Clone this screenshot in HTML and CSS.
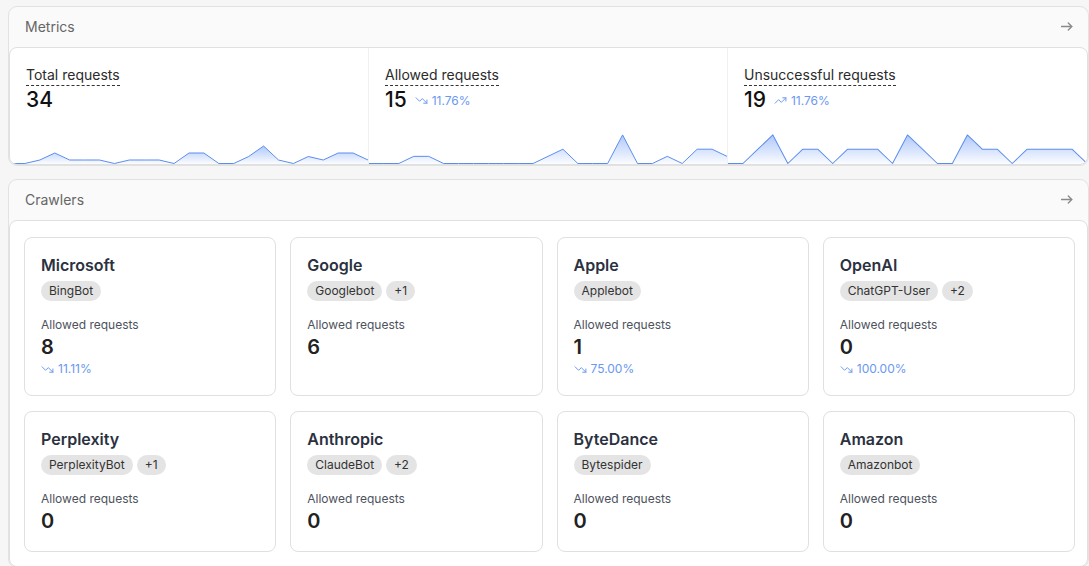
FILE: index.html
```html
<!DOCTYPE html>
<html lang="en">
<head>
<meta charset="utf-8">
<title>Metrics</title>
<link rel="stylesheet" href="styles.css">
</head>
<body>
<div class="page">
  <section class="section">
    <header class="section-head">
      <span class="section-title">Metrics</span>
      <svg class="head-arrow" viewBox="0 0 12 9" width="12" height="9"><path d="M0.5 4.5H11M7.3 1L10.8 4.5L7.3 8"/></svg>
    </header>
    <div class="section-body metrics">
      <div class="metric">
        <span class="metric-label">Total requests</span>
        <div class="metric-value-row"><span class="metric-value">34</span></div>
        <svg class="spark" viewBox="0 0 360 36" preserveAspectRatio="none">
          <defs><linearGradient id="g1" x1="0" y1="0" x2="0" y2="1"><stop offset="0" stop-color="#6e9bf5" stop-opacity="0.55"/><stop offset="1" stop-color="#6e9bf5" stop-opacity="0.03"/></linearGradient></defs>
          <path class="spark-fill" fill="url(#g1)" d="M0,36 L0,35.5 15,35.5 30,32 45,25 60,32 75,32 90,32 105,35.5 120,32 135,32 150,32 165,35.5 180,25 195,25 210,35.5 225,35.5 240,28.5 255,18 270,32 285,35.5 300,28.5 315,32 330,25 345,25 360,32 L360,36 Z"/>
          <polyline class="spark-line" points="0,35.5 15,35.5 30,32 45,25 60,32 75,32 90,32 105,35.5 120,32 135,32 150,32 165,35.5 180,25 195,25 210,35.5 225,35.5 240,28.5 255,18 270,32 285,35.5 300,28.5 315,32 330,25 345,25 360,32"/>
        </svg>
      </div>
      <div class="metric">
        <span class="metric-label">Allowed requests</span>
        <div class="metric-value-row">
          <span class="metric-value">15</span>
          <span class="trend"><svg class="trend-icon" viewBox="0 0 24 24"><polyline points="22 17 13.5 8.5 8.5 13.5 2 7"/><polyline points="16 17 22 17 22 11"/></svg>11.76%</span>
        </div>
        <svg class="spark" viewBox="0 0 360 36" preserveAspectRatio="none">
          <defs><linearGradient id="g2" x1="0" y1="0" x2="0" y2="1"><stop offset="0" stop-color="#6e9bf5" stop-opacity="0.55"/><stop offset="1" stop-color="#6e9bf5" stop-opacity="0.03"/></linearGradient></defs>
          <path class="spark-fill" fill="url(#g2)" d="M0,36 L0,35.5 15,35.5 30,35.5 45,28.35 60,28.35 75,35.5 90,35.5 105,35.5 120,35.5 135,35.5 150,35.5 165,35.5 180,28.35 195,21.2 210,35.5 225,35.5 240,35.5 255,6.9 270,35.5 285,35.5 300,28.35 315,35.5 330,21.2 345,21.2 360,28.35 L360,36 Z"/>
          <polyline class="spark-line" points="0,35.5 15,35.5 30,35.5 45,28.35 60,28.35 75,35.5 90,35.5 105,35.5 120,35.5 135,35.5 150,35.5 165,35.5 180,28.35 195,21.2 210,35.5 225,35.5 240,35.5 255,6.9 270,35.5 285,35.5 300,28.35 315,35.5 330,21.2 345,21.2 360,28.35"/>
        </svg>
      </div>
      <div class="metric">
        <span class="metric-label">Unsuccessful requests</span>
        <div class="metric-value-row">
          <span class="metric-value">19</span>
          <span class="trend"><svg class="trend-icon" viewBox="0 0 24 24"><polyline points="22 7 13.5 15.5 8.5 10.5 2 17"/><polyline points="16 7 22 7 22 13"/></svg>11.76%</span>
        </div>
        <svg class="spark" viewBox="0 0 360 36" preserveAspectRatio="none">
          <defs><linearGradient id="g3" x1="0" y1="0" x2="0" y2="1"><stop offset="0" stop-color="#6e9bf5" stop-opacity="0.55"/><stop offset="1" stop-color="#6e9bf5" stop-opacity="0.03"/></linearGradient></defs>
          <path class="spark-fill" fill="url(#g3)" d="M0,36 L0,35.5 15,35.5 30,21.2 45,6.9 60,35.5 75,21.2 90,21.2 105,35.5 120,21.2 135,21.2 150,21.2 165,35.5 180,6.9 195,21.2 210,35.5 225,35.5 240,6.9 255,21.2 270,21.2 285,35.5 300,21.2 315,21.2 330,21.2 345,21.2 360,35.5 L360,36 Z"/>
          <polyline class="spark-line" points="0,35.5 15,35.5 30,21.2 45,6.9 60,35.5 75,21.2 90,21.2 105,35.5 120,21.2 135,21.2 150,21.2 165,35.5 180,6.9 195,21.2 210,35.5 225,35.5 240,6.9 255,21.2 270,21.2 285,35.5 300,21.2 315,21.2 330,21.2 345,21.2 360,35.5"/>
        </svg>
      </div>
    </div>
  </section>

  <section class="section">
    <header class="section-head">
      <span class="section-title">Crawlers</span>
      <svg class="head-arrow" viewBox="0 0 12 9" width="12" height="9"><path d="M0.5 4.5H11M7.3 1L10.8 4.5L7.3 8"/></svg>
    </header>
    <div class="section-body crawlers">
      <div class="card">
        <div class="card-title">Microsoft</div>
        <div class="badges"><span class="badge">BingBot</span></div>
        <div class="card-label">Allowed requests</div>
        <div class="card-value">8</div>
        <div class="trend card-trend"><svg class="trend-icon" viewBox="0 0 24 24"><polyline points="22 17 13.5 8.5 8.5 13.5 2 7"/><polyline points="16 17 22 17 22 11"/></svg>11.11%</div>
      </div>
      <div class="card">
        <div class="card-title">Google</div>
        <div class="badges"><span class="badge">Googlebot</span><span class="badge">+1</span></div>
        <div class="card-label">Allowed requests</div>
        <div class="card-value">6</div>
      </div>
      <div class="card">
        <div class="card-title">Apple</div>
        <div class="badges"><span class="badge">Applebot</span></div>
        <div class="card-label">Allowed requests</div>
        <div class="card-value">1</div>
        <div class="trend card-trend"><svg class="trend-icon" viewBox="0 0 24 24"><polyline points="22 17 13.5 8.5 8.5 13.5 2 7"/><polyline points="16 17 22 17 22 11"/></svg>75.00%</div>
      </div>
      <div class="card">
        <div class="card-title">OpenAI</div>
        <div class="badges"><span class="badge">ChatGPT-User</span><span class="badge">+2</span></div>
        <div class="card-label">Allowed requests</div>
        <div class="card-value">0</div>
        <div class="trend card-trend"><svg class="trend-icon" viewBox="0 0 24 24"><polyline points="22 17 13.5 8.5 8.5 13.5 2 7"/><polyline points="16 17 22 17 22 11"/></svg>100.00%</div>
      </div>
      <div class="card">
        <div class="card-title">Perplexity</div>
        <div class="badges"><span class="badge">PerplexityBot</span><span class="badge">+1</span></div>
        <div class="card-label">Allowed requests</div>
        <div class="card-value">0</div>
      </div>
      <div class="card">
        <div class="card-title">Anthropic</div>
        <div class="badges"><span class="badge">ClaudeBot</span><span class="badge">+2</span></div>
        <div class="card-label">Allowed requests</div>
        <div class="card-value">0</div>
      </div>
      <div class="card">
        <div class="card-title">ByteDance</div>
        <div class="badges"><span class="badge">Bytespider</span></div>
        <div class="card-label">Allowed requests</div>
        <div class="card-value">0</div>
      </div>
      <div class="card">
        <div class="card-title">Amazon</div>
        <div class="badges"><span class="badge">Amazonbot</span></div>
        <div class="card-label">Allowed requests</div>
        <div class="card-value">0</div>
      </div>
    </div>
  </section>
</div>
</body>
</html>
```

FILE: styles.css
```css
* { box-sizing: border-box; }

html, body {
  margin: 0;
  padding: 0;
  background: #f6f6f6;
  font-family: Inter, "Noto Sans", "Liberation Sans", sans-serif;
  color: #222;
}

.page {
  padding: 6px 0 0 8px;
  display: flex;
  flex-direction: column;
  gap: 13px;
}

.section {
  border: 1px solid #e2e2e2;
  border-radius: 9px;
  background: #fafafa;
}

.section-head {
  height: 40px;
  display: flex;
  align-items: center;
  justify-content: space-between;
  padding: 0 15px 1px 16px;
}

.section-title {
  font-size: 14px;
  color: #666;
}

.head-arrow {
  fill: none;
  stroke: #8a8a8a;
  stroke-width: 1.3;
  stroke-linecap: round;
  stroke-linejoin: round;
}

.section-body {
  background: #fff;
  border: 1px solid #e0e0e0;
  border-radius: 8px;
}

/* Metrics */
.metrics {
  display: grid;
  grid-template-columns: repeat(3, 1fr);
  overflow: hidden;
}

.metric {
  display: flex;
  flex-direction: column;
  align-items: flex-start;
  padding-top: 17px;
  border-right: 1px solid #f1f1f1;
}

.metric:last-child { border-right: none; }

.metric-label {
  font-size: 14px;
  line-height: 20px;
  color: #2b2b2b;
  margin-left: 16px;
  border-bottom: 1px dashed #333;
}

.metric-value-row {
  display: flex;
  align-items: center;
  gap: 8px;
  margin-left: 16px;
  height: 28px;
}

.metric-value {
  font-size: 21px;
  font-weight: 500;
  color: #111;
  line-height: 28px;
}

.trend {
  display: inline-flex;
  align-items: center;
  gap: 4px;
  font-size: 12px;
  color: #6a97f0;
}

.trend-icon {
  width: 13px;
  height: 13px;
  fill: none;
  stroke: #6a97f0;
  stroke-width: 1.8;
  stroke-linecap: round;
  stroke-linejoin: round;
}

.spark {
  display: block;
  width: 100%;
  height: 36px;
  margin-top: 14px;
}

.spark-line {
  fill: none;
  stroke: #5b8def;
  stroke-width: 1;
  vector-effect: non-scaling-stroke;
  stroke-linejoin: round;
}

/* Crawlers */
.crawlers {
  display: grid;
  grid-template-columns: repeat(4, 1fr);
  gap: 15px 14px;
  padding: 16px 12px 14px 14px;
}

.card {
  background: #fff;
  border: 1px solid #e0e0e0;
  border-radius: 8px;
  padding: 15px 16px 18px;
  display: flex;
  flex-direction: column;
  align-items: flex-start;
}

.card-title {
  font-size: 16px;
  line-height: 24px;
  font-weight: 600;
  color: #2b3140;
}

.badges {
  display: flex;
  gap: 4px;
  margin-top: 4px;
}

.badge {
  height: 20px;
  line-height: 20px;
  padding: 0 8px;
  border-radius: 10px;
  background: #e4e4e4;
  font-size: 12px;
  color: #333;
}

.card-label {
  margin-top: 16px;
  font-size: 12px;
  line-height: 16px;
  color: #4d525c;
}

.card-value {
  margin-top: 2px;
  font-size: 20px;
  line-height: 24px;
  font-weight: 600;
  color: #222;
}

.card-trend {
  margin-top: 2px;
  line-height: 16px;
}
```
